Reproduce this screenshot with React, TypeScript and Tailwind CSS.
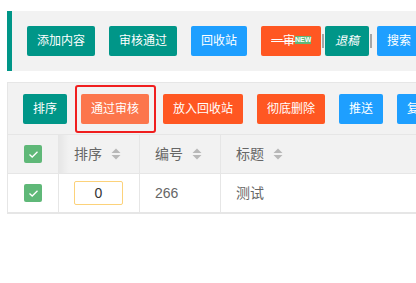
import React from 'react';

const font = { fontFamily: '"Liberation Sans", "Noto Sans CJK SC", sans-serif' };

const topButtons = [
  { label: '添加内容', color: 'bg-[#009688]' },
  { label: '审核通过', color: 'bg-[#009688]' },
  { label: '回收站', color: 'bg-[#1E9FFF]' },
];

const toolButtons = [
  { label: '排序', color: 'bg-[#009688]' },
  { label: '通过审核', color: 'bg-[#FC764C]', marked: true },
  { label: '放入回收站', color: 'bg-[#FF5722]' },
  { label: '彻底删除', color: 'bg-[#FF5722]' },
  { label: '推送', color: 'bg-[#1E9FFF]' },
  { label: '复制', color: 'bg-[#1E9FFF]' },
];

function Btn({ color, children, className = '' }: { color: string; children: React.ReactNode; className?: string }) {
  return (
    <span className={`inline-flex items-center h-[30px] px-[10px] rounded-[2px] text-white text-[12px] leading-[30px] whitespace-nowrap ${color} ${className}`}>
      {children}
    </span>
  );
}

function Sorter() {
  return (
    <svg width="10" height="12" viewBox="0 0 10 12" className="ml-[9px]">
      <polygon points="0.5,5 5,0.5 9.5,5" fill="#b8b8b8" />
      <polygon points="0.5,7 5,11.5 9.5,7" fill="#b8b8b8" />
    </svg>
  );
}

function Check() {
  return (
    <span className="w-[18px] h-[18px] rounded-[2px] bg-[#5FB878] flex items-center justify-center">
      <svg width="11" height="9" viewBox="0 0 11 9">
        <path d="M1.5 4.5 L4.2 7 L9.5 1.8" stroke="white" strokeWidth="1.3" fill="none" />
      </svg>
    </span>
  );
}

export default function App() {
  return (
    <div className="w-[416px] h-[283px] overflow-hidden bg-white" style={font}>
      <div className="w-[640px] pt-[11px] pl-[7px]">
        {/* Top action bar */}
        <div className="flex items-center gap-[14px] bg-[#f2f2f2] border-l-[5px] border-[#009688] p-[15px]">
          {topButtons.map((b) => (
            <Btn key={b.label} color={b.color}>{b.label}</Btn>
          ))}
          <div className="flex items-center">
            <Btn color="bg-[#FF5722]">
              <span className="line-through">一审</span>
              <span className="inline-block w-[16px] h-[8px] bg-[#5FB878] text-white text-[7px] font-bold leading-[8px] text-center -mt-[3px]">NEW</span>
            </Btn>
            <span className="w-[2px] h-[14px] bg-[#a6a6a6] mx-[1px]" />
            <Btn color="bg-[#009688]"><span className="italic">退稿</span></Btn>
            <span className="w-[2px] h-[14px] bg-[#a6a6a6] ml-[1px] mr-[5px]" />
            <Btn color="bg-[#1E9FFF]">搜索</Btn>
          </div>
        </div>

        {/* Table with toolbar */}
        <div className="mt-[11px] border border-r-0 border-[#e6e6e6]">
          <div className="flex items-center gap-[14px] bg-[#f2f2f2] px-[15px] pt-[11px] pb-[10px] border-b border-[#e6e6e6]">
            {toolButtons.map((b) => (
              <span key={b.label} className="relative">
                <Btn color={b.color}>{b.label}</Btn>
                {b.marked && (
                  <span className="absolute -left-[6px] -right-[7px] -top-[9px] -bottom-[9px] border-2 border-[#f01e1e] rounded-[3px]" />
                )}
              </span>
            ))}
          </div>

          <div className="grid grid-cols-[50px_81px_81px_1fr] text-[14px] text-[#666]">
            {/* header */}
            <div className="h-[39px] bg-[#f2f2f2] border-b border-[#e6e6e6] flex items-center justify-center">
              <Check />
            </div>
            <div className="relative h-[39px] bg-[#f2f2f2] border-b border-l border-[#e6e6e6] flex items-center pl-[15px]">
              <span className="absolute left-0 top-0 bottom-0 w-[10px] bg-gradient-to-r from-black/5 to-transparent" />
              排序<Sorter />
            </div>
            <div className="h-[39px] bg-[#f2f2f2] border-b border-l border-[#e6e6e6] flex items-center pl-[15px]">
              编号<Sorter />
            </div>
            <div className="h-[39px] bg-[#f2f2f2] border-b border-l border-[#e6e6e6] flex items-center pl-[15px]">
              标题<Sorter />
            </div>

            {/* row */}
            <div className="h-[39px] border-b border-[#e6e6e6] flex items-center justify-center">
              <Check />
            </div>
            <div className="h-[39px] border-b border-l border-[#e6e6e6] flex items-center pl-[15px]">
              <span className="w-[49px] h-[24px] border border-[#fcd27a] rounded-[2px] flex items-center justify-center text-[#333] font-normal">0</span>
            </div>
            <div className="h-[39px] border-b border-l border-[#e6e6e6] flex items-center pl-[15px]">266</div>
            <div className="h-[39px] border-b border-l border-[#e6e6e6] flex items-center pl-[15px]">测试</div>
          </div>
        </div>
      </div>
    </div>
  );
}
